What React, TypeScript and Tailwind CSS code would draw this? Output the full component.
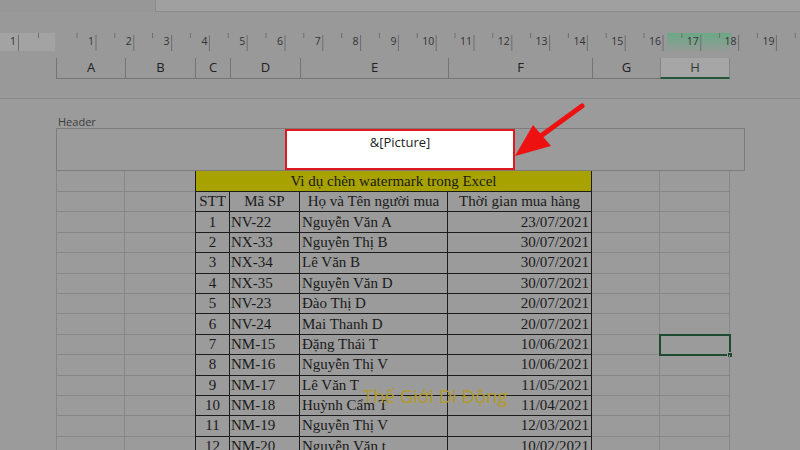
import React from 'react';

type Row = { stt: number; code: string; name: string; date: string };

const rows: Row[] = [
  { stt: 1, code: 'NV-22', name: 'Nguyễn Văn A', date: '23/07/2021' },
  { stt: 2, code: 'NX-33', name: 'Nguyễn Thị B', date: '30/07/2021' },
  { stt: 3, code: 'NX-34', name: 'Lê Văn B', date: '30/07/2021' },
  { stt: 4, code: 'NX-35', name: 'Nguyễn Văn D', date: '30/07/2021' },
  { stt: 5, code: 'NV-23', name: 'Đào Thị D', date: '20/07/2021' },
  { stt: 6, code: 'NV-24', name: 'Mai Thanh D', date: '20/07/2021' },
  { stt: 7, code: 'NM-15', name: 'Đặng Thái T', date: '10/06/2021' },
  { stt: 8, code: 'NM-16', name: 'Nguyễn Thị V', date: '10/06/2021' },
  { stt: 9, code: 'NM-17', name: 'Lê Văn T', date: '11/05/2021' },
  { stt: 10, code: 'NM-18', name: 'Huỳnh Cẩm T', date: '11/04/2021' },
  { stt: 11, code: 'NM-19', name: 'Nguyễn Thị V', date: '12/03/2021' },
  { stt: 12, code: 'NM-20', name: 'Nguyễn Văn t', date: '10/02/2021' },
];

const colHeads = [
  { l: 'A', w: 'w-[69px]' },
  { l: 'B', w: 'w-[70px]' },
  { l: 'C', w: 'w-[35px]' },
  { l: 'D', w: 'w-[70px]' },
  { l: 'E', w: 'w-[148px]' },
  { l: 'F', w: 'w-[144px]' },
  { l: 'G', w: 'w-[68px]' },
];

// thước kẻ phía trên
function Ruler() {
  const step = 37.8;
  const majors = Array.from({ length: 19 }, (_, i) => 96 + i * step);
  const minors = Array.from({ length: 20 }, (_, i) => 77 + i * step);
  return (
    <svg width="800" height="18" className="block">
      <defs>
        <linearGradient id="hl" x1="0" y1="0" x2="0" y2="1">
          <stop offset="0" stopColor="#6aa886" />
          <stop offset="1" stopColor="#6aa886" stopOpacity="0.1" />
        </linearGradient>
      </defs>
      <rect x="0" y="0" width="55" height="18" fill="#a3a3a3" />
      <rect x="667" y="0" width="64" height="18" fill="url(#hl)" />
      <line x1="18.5" y1="2" x2="18.5" y2="18" stroke="#6e6e6e" />
      <line x1="38.5" y1="0" x2="38.5" y2="5" stroke="#6e6e6e" />
      <text x="16" y="12" fontSize="10.5" textAnchor="end" fill="#333" fontFamily="'Open Sans', sans-serif">1</text>
      {minors.map((x, i) => (
        <line key={'m' + i} x1={x} y1="0" x2={x} y2="5" stroke="#6e6e6e" />
      ))}
      {majors.map((x, i) => (
        <g key={'M' + i}>
          <line x1={x} y1="2" x2={x} y2="18" stroke="#6e6e6e" />
          <text x={x - 2} y="12" fontSize="10.5" textAnchor="end" fill="#333" fontFamily="'Open Sans', sans-serif">
            {i + 1}
          </text>
        </g>
      ))}
    </svg>
  );
}

const gray = 'border-[#878787]';
const dark = 'border-[#1c1c1c]';

function SideLeft() {
  return (
    <>
      <div className={`w-[69px] h-full border-l border-r border-b ${gray}`} />
      <div className={`w-[70px] h-full border-b ${gray}`} />
    </>
  );
}

function SideRight({ selected }: { selected?: boolean }) {
  return (
    <>
      <div className={`w-[68px] h-full border-r border-b ${gray}`} />
      <div className={`relative w-[70px] h-full border-r border-b ${gray}`}>
        {selected && (
          <div className="absolute -left-[1px] -top-[1px] w-[72px] h-[22px] border-2 border-[#1d4a30]">
            <div className="absolute -right-[4px] -bottom-[4px] w-[6px] h-[6px] bg-[#1d4a30] border border-[#9b9b9b]" />
          </div>
        )}
      </div>
    </>
  );
}

export default function App() {
  const serif = { fontFamily: "'Liberation Serif', 'Times New Roman', serif" };
  return (
    <div
      className="relative w-[800px] h-[450px] overflow-hidden bg-[#999999] text-[#1a1a1a]"
      style={{ fontFamily: "'Open Sans', 'Noto Sans', sans-serif" }}
    >
      {/* thanh trên cùng */}
      <div className="flex h-[12px]">
        <div className="w-[155px] bg-[#979797]" />
        <div className="flex-1 bg-[#a0a0a0] border-l border-b border-[#8b8b8b]" />
      </div>
      <div className="h-[21px]" />
      <Ruler />
      <div className="h-[7px]" />

      {/* tiêu đề cột */}
      <div className="flex h-[21px] pl-[56px]">
        {colHeads.map((c) => (
          <div
            key={c.l}
            className={`${c.w} h-full flex items-center justify-center border-l border-b border-[#747474] text-[13px] text-[#222]`}
          >
            {c.l}
          </div>
        ))}
        <div className="w-[70px] h-full flex items-center justify-center bg-[#a6a6a6] border-l border-r border-[#858585] border-b-2 border-b-[#23573a] text-[13px] text-[#2c3f34]">
          H
        </div>
      </div>
      <div className="h-[20px] border-b border-[#898989]" />

      {/* trang */}
      <div className="bg-[#9b9b9b] pl-[56px]">
        <div className="h-[16px]" />
        <div className="h-[13px] pl-[2px] text-[11px] leading-[13px] text-[#3d3d3d]">Header</div>
        <div className="flex h-[43px] w-[689px] border border-[#7c7c7c]">
          <div className="w-[228px]" />
          <div className="w-[230px] h-full bg-white border-2 border-[#e0171d] flex justify-center pt-[2px]">
            <span className="text-[13px] leading-[18px] text-[#222]">&amp;[Picture]</span>
          </div>
          <div className="flex-1" />
        </div>

        {/* bảng */}
        <div className="relative" style={serif}>
          <div className="flex h-[21px]">
            <SideLeft />
            <div
              className={`w-[397px] h-full flex items-center justify-center bg-[#a7a200] border-l border-r border-b ${dark} text-[15px]`}
            >
              Vi dụ chèn watermark trong Excel
            </div>
            <SideRight />
          </div>
          <div className="flex h-[20.4px] text-[15px] leading-none">
            <SideLeft />
            <div className={`w-[35px] h-full flex items-center justify-center border-l border-r border-b ${dark}`}>STT</div>
            <div className={`w-[70px] h-full flex items-center justify-center border-r border-b ${dark}`}>Mã SP</div>
            <div className={`w-[148px] h-full flex items-center justify-center border-r border-b ${dark}`}>
              Họ và Tên người mua
            </div>
            <div className={`w-[144px] h-full flex items-center justify-center border-r border-b ${dark}`}>
              Thời gian mua hàng
            </div>
            <SideRight />
          </div>
          {rows.map((r) => (
            <div key={r.stt} className="flex h-[20.4px] text-[15px] leading-none">
              <SideLeft />
              <div className={`w-[35px] h-full flex items-center justify-center border-l border-r border-b ${dark}`}>
                {r.stt}
              </div>
              <div className={`w-[70px] h-full flex items-center pl-[1px] border-r border-b ${dark}`}>{r.code}</div>
              <div className={`w-[148px] h-full flex items-center pl-[2px] border-r border-b ${dark}`}>{r.name}</div>
              <div className={`w-[144px] h-full flex items-center justify-end pr-[2px] border-r border-b ${dark}`}>
                {r.date}
              </div>
              <SideRight selected={r.stt === 7} />
            </div>
          ))}

          {/* watermark */}
          <div
            className="absolute left-[307px] top-[216px] text-[18.5px] leading-none text-[#b39a22] whitespace-nowrap"
            style={{ fontFamily: "'Open Sans', sans-serif" }}
          >
            Thế Giới Di Động
          </div>
        </div>
      </div>

      {/* mũi tên đỏ */}
      <svg className="absolute left-0 top-0 pointer-events-none" width="800" height="450">
        <line x1="582" y1="106" x2="538" y2="138" stroke="#ee1111" strokeWidth="5" strokeLinecap="round" />
        <polygon points="515,156 533,125 551,146" fill="#ee1111" />
      </svg>
    </div>
  );
}
